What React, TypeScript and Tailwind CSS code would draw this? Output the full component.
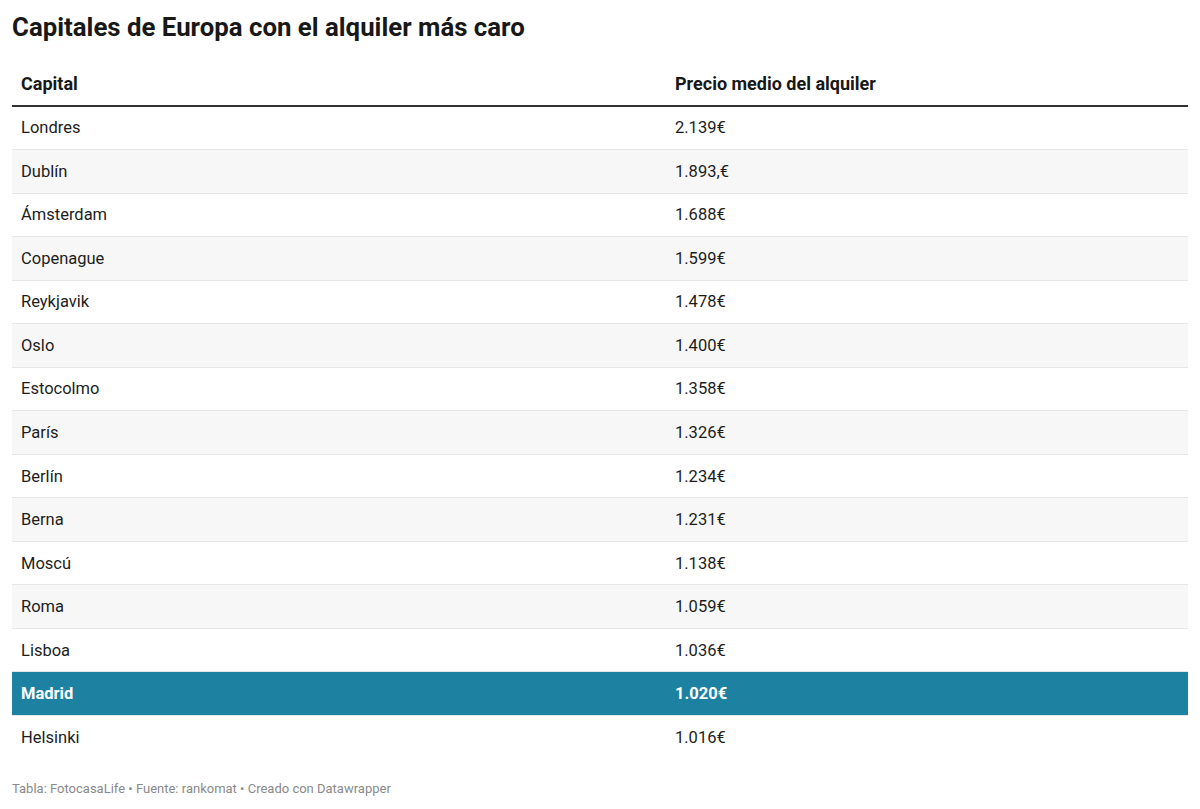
import React from "react";

const rows: [string, string][] = [
  ["Londres", "2.139€"],
  ["Dublín", "1.893,€"],
  ["Ámsterdam", "1.688€"],
  ["Copenague", "1.599€"],
  ["Reykjavik", "1.478€"],
  ["Oslo", "1.400€"],
  ["Estocolmo", "1.358€"],
  ["París", "1.326€"],
  ["Berlín", "1.234€"],
  ["Berna", "1.231€"],
  ["Moscú", "1.138€"],
  ["Roma", "1.059€"],
  ["Lisboa", "1.036€"],
  ["Madrid", "1.020€"],
  ["Helsinki", "1.016€"],
];

export default function App() {
  return (
    <div
      className="w-[1200px] h-[809px] bg-white px-3 text-[#1d1d1d]"
      style={{ fontFamily: "Roboto, 'Liberation Sans', sans-serif" }}
    >
      <h1 className="pt-[12px] text-[25.8px] leading-[30px] font-bold text-[#181818]">
        Capitales de Europa con el alquiler más caro
      </h1>
      <div className="mt-[22px] w-[1176px]">
        <div className="grid grid-cols-[654px_522px] h-[42.5px] border-b-2 border-[#333333] items-end pb-[8.5px] text-[18px] leading-[24px] font-bold text-[#181818]">
          <div className="pl-[9px]">Capital</div>
          <div className="pl-[9px]">Precio medio del alquiler</div>
        </div>
        {rows.map(([c, p], i) => {
          const hl = c === "Madrid";
          const stripe = i % 2 === 1;
          return (
            <div
              key={c}
              className={
                "grid grid-cols-[654px_522px] h-[43.53px] items-center pt-[2px] text-[16.5px] " +
                (hl
                  ? "bg-[#1d81a2] text-white font-bold"
                  : stripe
                  ? "bg-[#f7f7f7] text-[#1d1d1d]"
                  : "bg-white text-[#1d1d1d]") +
                (i < rows.length - 1 ? " border-b border-[#e6e6e6]" : "")
              }
            >
              <div className="pl-[9px]">{c}</div>
              <div className="pl-[9px]">{p}</div>
            </div>
          );
        })}
      </div>
      <div className="mt-[20px] text-[13px] text-[#8a8a8a]">
        Tabla: FotocasaLife • Fuente: rankomat • Creado con Datawrapper
      </div>
    </div>
  );
}
